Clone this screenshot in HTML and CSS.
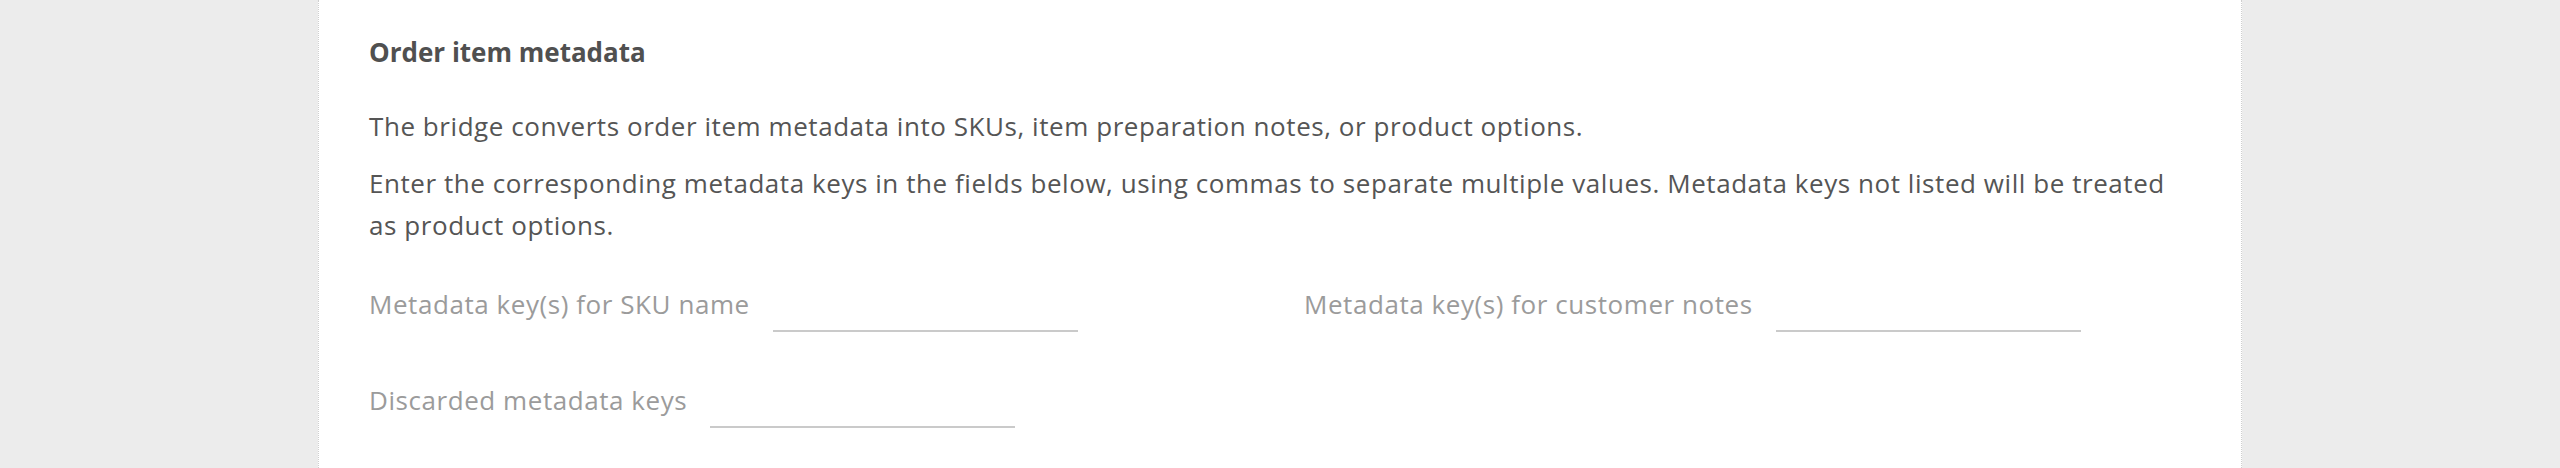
FILE: index.html
```html
<!DOCTYPE html>
<html lang="en">
<head>
<meta charset="utf-8">
<title>Order item metadata</title>
<link rel="stylesheet" href="styles.css">
</head>
<body>
<main class="panel">
  <h2 class="section-title">Order item metadata</h2>
  <p class="intro">The bridge converts order item metadata into SKUs, item preparation notes, or product options.</p>
  <p class="help">Enter the corresponding metadata keys in the fields below, using commas to separate multiple values. Metadata keys not listed will be treated as product options.</p>
  <div class="fields">
    <label class="field"><span class="field-label">Metadata key(s) for SKU name</span><input class="field-input" type="text"></label>
    <label class="field"><span class="field-label">Metadata key(s) for customer notes</span><input class="field-input" type="text"></label>
    <label class="field"><span class="field-label">Discarded metadata keys</span><input class="field-input" type="text"></label>
  </div>
</main>
</body>
</html>
```
FILE: styles.css
```css
html, body {
  margin: 0;
  padding: 0;
}
body {
  background: #ececec;
  font-family: "Open Sans", "Noto Sans", "Liberation Sans", sans-serif;
  font-size: 26px;
  letter-spacing: 0.56px;
  line-height: 42px;
  color: #555555;
}
.panel {
  box-sizing: border-box;
  width: 1924px;
  min-height: 468px;
  margin: 0 auto;
  background: #ffffff;
  border-left: 1px dotted #cfcfcf;
  border-right: 1px dotted #cfcfcf;
  padding: 31px 50px;
}
.section-title {
  margin: 0 0 32px;
  font-size: 26px;
  letter-spacing: 0;
  line-height: 42px;
  font-weight: 700;
  color: #505050;
}
.intro {
  margin: 0 0 15px;
}
.help {
  margin: 0 0 37px;
}
.fields {
  display: grid;
  grid-template-columns: 1fr 1fr;
  column-gap: 48px;
  row-gap: 47px;
}
.field {
  display: flex;
  align-items: flex-start;
}
.field-label {
  color: #9b9b9b;
  white-space: nowrap;
}
.field-input {
  box-sizing: border-box;
  width: 305px;
  height: 49px;
  margin-left: 23px;
  border: none;
  border-bottom: 2px solid #cacaca;
  background: transparent;
  font: inherit;
  color: #555555;
  outline: none;
  padding: 0;
}
```
